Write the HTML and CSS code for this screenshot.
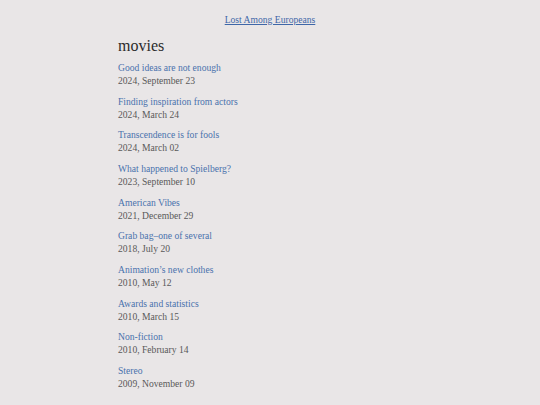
FILE: index.html
```html
<!DOCTYPE html>
<html lang="en">
<head>
    <meta charset="UTF-8">
    <title>movies - Lost Among Europeans</title>
    <link rel="stylesheet" href="styles.css">
</head>
<body>
    <header class="site-header">
        <a href="/">Lost Among Europeans</a>
    </header>

    <main class="tag-page">
        <h1 class="tag-title">movies</h1>
        <ul class="post-list">
            <li><a href="#">Good ideas are not enough</a><span class="post-date">2024, September 23</span></li>
            <li><a href="#">Finding inspiration from actors</a><span class="post-date">2024, March 24</span></li>
            <li><a href="#">Transcendence is for fools</a><span class="post-date">2024, March 02</span></li>
            <li><a href="#">What happened to Spielberg?</a><span class="post-date">2023, September 10</span></li>
            <li><a href="#">American Vibes</a><span class="post-date">2021, December 29</span></li>
            <li><a href="#">Grab bag–one of several</a><span class="post-date">2018, July 20</span></li>
            <li><a href="#">Animation’s new clothes</a><span class="post-date">2010, May 12</span></li>
            <li><a href="#">Awards and statistics</a><span class="post-date">2010, March 15</span></li>
            <li><a href="#">Non-fiction</a><span class="post-date">2010, February 14</span></li>
            <li><a href="#">Stereo</a><span class="post-date">2009, November 09</span></li>
        </ul>
    </main>
</body>
</html>
```

FILE: styles.css
```css
* {
    margin: 0;
    padding: 0;
    box-sizing: border-box;
}

body {
    font-family: "Liberation Serif", "Times New Roman", serif;
    background: #e9e6e7;
    color: #3a3a3a;
    font-size: 9.6px;
}

.site-header {
    text-align: center;
    padding-top: 14px;
    height: 36px;
}

.site-header a {
    color: #3f67a8;
}

.tag-page {
    width: 304px;
    margin: 0 auto;
}

.tag-title {
    font-size: 16px;
    font-weight: normal;
    color: #2b2b2b;
    line-height: 20px;
    margin-bottom: 5px;
}

.post-list {
    list-style: none;
}

.post-list li {
    display: flex;
    flex-direction: column;
    margin-bottom: 7px;
}

.post-list a {
    color: #4a72ad;
    text-decoration: none;
    line-height: 13px;
}

.post-date {
    color: #595959;
    line-height: 13.67px;
}
```
